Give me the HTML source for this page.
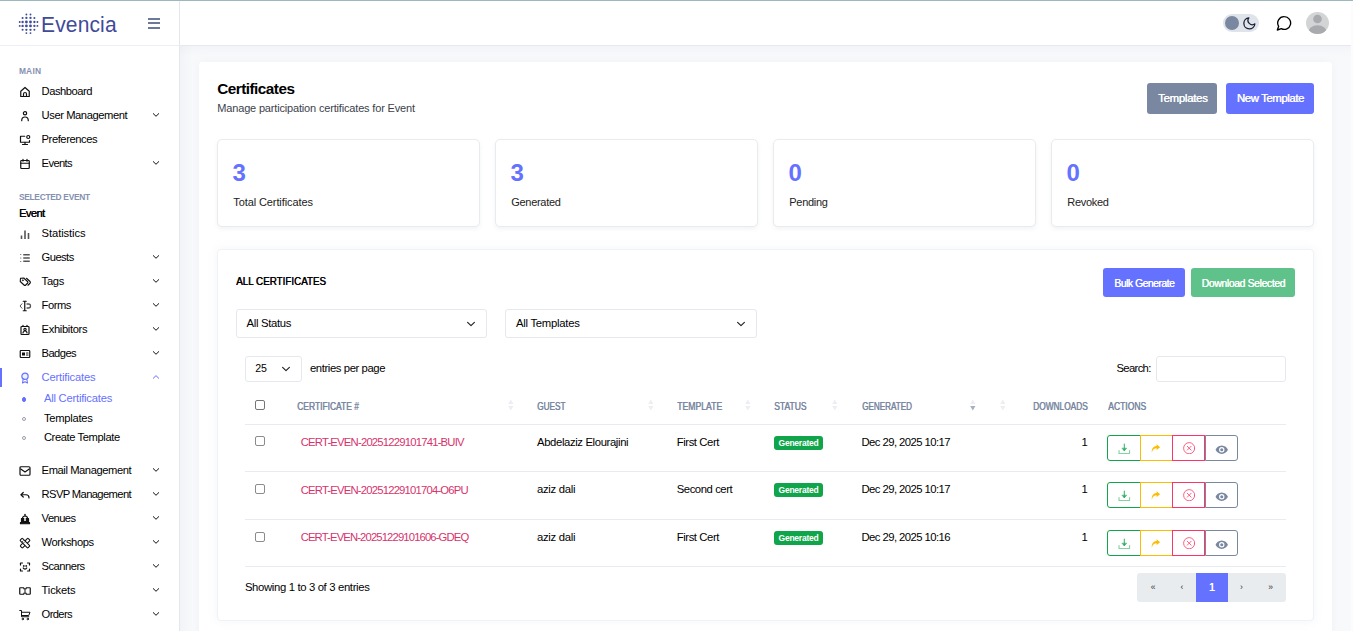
<!DOCTYPE html>
<html lang="en">
<head>
<meta charset="utf-8">
<title>Certificates - Evencia</title>
<style>
*{box-sizing:border-box;margin:0;padding:0}
html,body{width:1353px;height:631px;overflow:hidden}
body{font-family:"Liberation Sans",sans-serif;font-size:11px;color:#000;background:#f8f9fb;position:relative}
.topline{position:absolute;left:0;top:0;width:1353px;height:1px;background:#9bb8bd;z-index:60}
.rstrip{position:absolute;left:1351px;top:0;width:2px;height:631px;background:#fcfcfd;z-index:55}
/* header */
.header{position:absolute;left:0;top:0;width:1353px;height:46px;background:#fff;border-bottom:1px solid #e6e9ee;z-index:10;box-shadow:0 3px 8px rgba(180,188,205,.10)}
.logoBox{position:absolute;left:0;top:0;width:180px;height:46px;border-right:1px solid #e4e8ee;border-bottom:1px solid #eceff3;background:#fff;z-index:12}
.logoTxt{position:absolute;left:41px;top:11.7px;font-size:21px;line-height:26px;color:#3f4a9a;letter-spacing:.15px;white-space:nowrap;z-index:20;transform:scaleY(1.08);transform-origin:0 80%}
.burger{z-index:20;position:absolute;left:148px;top:18px;width:12px;height:11px}
.burger i{position:absolute;left:0;width:12px;height:2px;background:#6b7a99}
/* sidebar */
.sidebar{position:absolute;left:0;top:46px;width:180px;height:585px;background:#fff;border-right:1px solid #e4e8ee;z-index:11}
.sideshadow{position:absolute;left:180px;top:46px;width:12px;height:585px;background:linear-gradient(90deg,rgba(190,196,212,.10),rgba(190,196,212,0));z-index:5}
.ic{position:absolute;left:19px;width:12px;height:12px;color:#111;z-index:20}
.ic svg{display:block;width:12px;height:12px;fill:none;stroke:currentColor;stroke-width:2.4;stroke-linecap:round;stroke-linejoin:round;overflow:visible}
.ic.gray{color:#555}
.ch{position:absolute;left:151.5px;top:0;width:8px;height:8px;color:#111;z-index:20}
.ch svg{display:block;width:8px;height:8px;fill:none;stroke:currentColor;stroke-width:1.25;stroke-linecap:round;stroke-linejoin:round}
.ic.active,.ch.active{color:#6571ff}
.actbar{position:absolute;left:0;top:368px;width:2px;height:19px;background:#6571ff;z-index:20}
.dot{position:absolute;left:21.8px;width:4.6px;height:4.6px;border-radius:50%;border:1px solid #9a9ea8;background:#fff;z-index:20}
.dot.on{background:#6571ff;border-color:#6571ff}
/* main */
.page{position:absolute;left:199px;top:62px;width:1133px;height:580px;background:#fff;border-radius:3px;box-shadow:0 0 8px rgba(183,192,206,.12)}
.t{position:absolute;white-space:nowrap}
.btn{position:absolute;color:#fff;border-radius:3px;text-align:center;white-space:nowrap}
.stat{position:absolute;top:139px;width:263px;height:88px;background:#fff;border:1px solid #e9ebef;border-radius:5px;box-shadow:0 2px 4px rgba(190,196,206,.2)}
.card{position:absolute;left:217px;top:249px;width:1097px;height:372px;background:#fff;border:1px solid #f1f2f8;border-radius:4px;box-shadow:0 0 10px rgba(183,192,206,.16)}
.sel{position:absolute;height:29px;background:#fff;border:1px solid #e5e8ee;border-radius:3px;font-size:11px;line-height:27px;padding-left:9px;color:#000;white-space:nowrap}
.sel svg{position:absolute;right:10px;top:10px;width:10px;height:8px;fill:none;stroke:#222;stroke-width:1.15;stroke-linecap:round;stroke-linejoin:round}
.th{position:absolute;top:400px;font-size:9px;font-weight:bold;color:#7987a1;line-height:12px;white-space:nowrap}
.hr{position:absolute;left:245px;width:1041px;height:1px;background:#e8ebef}
.cb{position:absolute;left:255px;width:10px;height:10px;border:1px solid #767676;border-radius:2px;background:#fff}
.td{position:absolute;font-size:11px;line-height:14px;white-space:nowrap;color:#000}
.lnk{color:#d6336c}
.badge{position:absolute;left:774px;width:49px;height:14px;background:#10a54a;border-radius:3px;color:#fff;font-size:8.5px;font-weight:bold;line-height:14px;text-align:center;letter-spacing:-.25px}
.ab{position:absolute;width:33px;height:26px;background:#fff;border:1px solid}
.ab svg{position:absolute;left:9px;top:5px;width:13px;height:13px}
.toggle{z-index:20;position:absolute;left:1223px;top:14px;width:36px;height:18px;border-radius:9px;background:#dfe3ea}
.toggle .knob{position:absolute;left:2px;top:2px;width:14px;height:14px;border-radius:50%;background:#7987a1}
.toggle svg{position:absolute;left:18.8px;top:1.5px;width:14.7px;height:14.7px;fill:none;stroke:#1a1f36;stroke-width:2.1;stroke-linejoin:round;stroke-linecap:round}
.chat{z-index:20;position:absolute;left:1276px;top:14.6px;width:16px;height:16px;fill:none;stroke:#000;stroke-width:2;stroke-linejoin:round}
.avatar{z-index:20;position:absolute;left:1306px;top:12px;width:23px;height:22px;border-radius:50%;background:#d3d4d6;overflow:hidden}
.avatar svg{display:block;width:23px;height:22px;fill:#a9aaae}
.sort{position:absolute;top:399px;width:5.6px;height:12px}
.cb.r{border-color:#8b8b8b}
.pag{position:absolute;left:1137px;top:573px;width:149px;height:29px;background:#e9ecef;border-radius:3px;overflow:hidden}
.pag span{position:absolute;top:0;height:29px;line-height:28px;text-align:center;font-size:8.5px;color:#333}
.pag span.on{background:#6571ff;color:#fff;font-size:11.5px;line-height:29px;text-shadow:.3px 0 0 #fff}
.logoDots{position:absolute;left:0;top:0;width:46px;height:46px;z-index:20}

</style>
</head>
<body>
<div class="page"></div>
<div class="btn" style="left:1147px;top:83px;width:70px;height:31px;background:#7987a1"></div>
<div class="btn" style="left:1226px;top:83px;width:88px;height:31px;background:#6571ff"></div>
<div class="stat" style="left:217px"></div>
<div class="stat" style="left:495px"></div>
<div class="stat" style="left:773px"></div>
<div class="stat" style="left:1051px"></div>
<div class="card"></div>
<div class="btn" style="left:1103px;top:268px;width:82px;height:29px;background:#6571ff"></div>
<div class="btn" style="left:1191px;top:268px;width:104px;height:29px;background:#5fc28a"></div>
<div class="sel" style="left:236px;top:309px;width:251px"><svg viewBox="0 0 10 8"><path d="M1.6 2.300l3.4 3.4 3.4-3.4"/></svg></div>
<div class="sel" style="left:505px;top:309px;width:252px"><svg viewBox="0 0 10 8"><path d="M1.6 2.300l3.4 3.4 3.4-3.4"/></svg></div>
<div class="sel" style="left:245px;top:356px;width:57px;height:26px"><svg viewBox="0 0 10 8" style="right:10px;top:8.3px"><path d="M1.6 2.300l3.4 3.4 3.4-3.4"/></svg></div>
<div class="sel" style="left:1156px;top:356px;width:130px;height:26px"></div>
<svg class="sort" style="left:508.4px" viewBox="0 0 6 12"><path d="M3 0L5.8 5H.2z" fill="#eceef3"/><path d="M3 12L5.8 7H.2z" fill="#eceef3"/></svg>
<svg class="sort" style="left:647.8px" viewBox="0 0 6 12"><path d="M3 0L5.8 5H.2z" fill="#eceef3"/><path d="M3 12L5.8 7H.2z" fill="#eceef3"/></svg>
<svg class="sort" style="left:745.2px" viewBox="0 0 6 12"><path d="M3 0L5.8 5H.2z" fill="#eceef3"/><path d="M3 12L5.8 7H.2z" fill="#eceef3"/></svg>
<svg class="sort" style="left:832.3px" viewBox="0 0 6 12"><path d="M3 0L5.8 5H.2z" fill="#eceef3"/><path d="M3 12L5.8 7H.2z" fill="#eceef3"/></svg>
<svg class="sort" style="left:999.6px" viewBox="0 0 6 12"><path d="M3 0L5.8 5H.2z" fill="#eceef3"/><path d="M3 12L5.8 7H.2z" fill="#eceef3"/></svg>
<svg class="sort" style="left:970px" viewBox="0 0 6 12"><path d="M3 0L5.8 5H.2z" fill="#eceef3"/><path d="M3 12L5.8 7H.2z" fill="#a7afc4"/></svg>
<div class="hr" style="top:424px"></div>
<div class="hr" style="top:471px"></div>
<div class="hr" style="top:519px"></div>
<div class="hr" style="top:566px"></div>
<div class="cb" style="top:400px"></div>
<div class="cb r" style="top:436px"></div>
<div class="cb r" style="top:484px"></div>
<div class="cb r" style="top:531.5px"></div>
<div class="ab" style="left:1107px;top:435px;width:34px;border-color:#10a54a;border-radius:3px 0 0 3px"><svg style="left:10px;top:6.8px;width:12.6px;height:12.6px" viewBox="0 0 24 24" fill="none" stroke="#2fae62" stroke-width="1.9" stroke-linecap="round" stroke-linejoin="round"><path d="M12 2v12.5"/><path d="M8 10.500l4 4.5 4-4.500z" fill="#2fae62" stroke-width="1.2"/><path d="M2 14.500V20h20v-5.5" stroke="#10a54a" opacity=".5" stroke-width="2.2"/></svg></div>
<div class="ab" style="left:1140px;top:435px;width:33px;border-color:#fbbc06"><svg style="left:9.1px;top:7.4px;width:11px;height:11px" viewBox="0 0 24 24"><path d="M14.5 2.500l7.5 6.5-7.5 6.500v-4c-5.5 0-8.5 3-10.5 9C3 13 7 6.8 14.5 6.500z" fill="#fbbc06"/></svg></div>
<div class="ab" style="left:1172px;top:435px;width:33px;border-color:#ff3366"><svg style="left:10px;top:5.95px;width:12.4px;height:12.4px" viewBox="0 0 24 24" fill="none" stroke="#ff3366" stroke-width="1.5" stroke-linecap="round"><circle cx="12" cy="12" r="10.8"/><path d="M8.3 8.300l7.4 7.400M15.7 8.300l-7.4 7.4"/></svg></div>
<div class="ab" style="left:1205px;top:435px;width:33px;border-color:#7987a1;border-radius:0 3px 3px 0"><svg style="left:8.800px;top:7.200px;width:13.500px;height:13.500px" viewBox="0 0 24 24"><path d="M12 4.500C6.5 4.5 2.5 8.5 1 12c1.5 3.5 5.5 7.5 11 7.500s9.5-4 11-7.500c-1.5-3.5-5.5-7.5-11-7.500zm0 12.300a4.8 4.8 0 1 1 0-9.6 4.8 4.8 0 0 1 0 9.600z" fill="#7987a1" fill-rule="evenodd"/><circle cx="12" cy="12" r="2.7" fill="#7987a1"/></svg></div>
<div class="ab" style="left:1107px;top:482px;width:34px;border-color:#10a54a;border-radius:3px 0 0 3px"><svg style="left:10px;top:6.8px;width:12.6px;height:12.6px" viewBox="0 0 24 24" fill="none" stroke="#2fae62" stroke-width="1.9" stroke-linecap="round" stroke-linejoin="round"><path d="M12 2v12.5"/><path d="M8 10.500l4 4.5 4-4.500z" fill="#2fae62" stroke-width="1.2"/><path d="M2 14.500V20h20v-5.5" stroke="#10a54a" opacity=".5" stroke-width="2.2"/></svg></div>
<div class="ab" style="left:1140px;top:482px;width:33px;border-color:#fbbc06"><svg style="left:9.1px;top:7.4px;width:11px;height:11px" viewBox="0 0 24 24"><path d="M14.5 2.500l7.5 6.5-7.5 6.500v-4c-5.5 0-8.5 3-10.5 9C3 13 7 6.8 14.5 6.500z" fill="#fbbc06"/></svg></div>
<div class="ab" style="left:1172px;top:482px;width:33px;border-color:#ff3366"><svg style="left:10px;top:5.95px;width:12.4px;height:12.4px" viewBox="0 0 24 24" fill="none" stroke="#ff3366" stroke-width="1.5" stroke-linecap="round"><circle cx="12" cy="12" r="10.8"/><path d="M8.3 8.300l7.4 7.400M15.7 8.300l-7.4 7.4"/></svg></div>
<div class="ab" style="left:1205px;top:482px;width:33px;border-color:#7987a1;border-radius:0 3px 3px 0"><svg style="left:8.800px;top:7.200px;width:13.500px;height:13.500px" viewBox="0 0 24 24"><path d="M12 4.500C6.5 4.5 2.5 8.5 1 12c1.5 3.5 5.5 7.5 11 7.500s9.5-4 11-7.500c-1.5-3.5-5.5-7.5-11-7.500zm0 12.300a4.8 4.8 0 1 1 0-9.6 4.8 4.8 0 0 1 0 9.600z" fill="#7987a1" fill-rule="evenodd"/><circle cx="12" cy="12" r="2.7" fill="#7987a1"/></svg></div>
<div class="ab" style="left:1107px;top:530px;width:34px;border-color:#10a54a;border-radius:3px 0 0 3px"><svg style="left:10px;top:6.8px;width:12.6px;height:12.6px" viewBox="0 0 24 24" fill="none" stroke="#2fae62" stroke-width="1.9" stroke-linecap="round" stroke-linejoin="round"><path d="M12 2v12.5"/><path d="M8 10.500l4 4.5 4-4.500z" fill="#2fae62" stroke-width="1.2"/><path d="M2 14.500V20h20v-5.5" stroke="#10a54a" opacity=".5" stroke-width="2.2"/></svg></div>
<div class="ab" style="left:1140px;top:530px;width:33px;border-color:#fbbc06"><svg style="left:9.1px;top:7.4px;width:11px;height:11px" viewBox="0 0 24 24"><path d="M14.5 2.500l7.5 6.5-7.5 6.500v-4c-5.5 0-8.5 3-10.5 9C3 13 7 6.8 14.5 6.500z" fill="#fbbc06"/></svg></div>
<div class="ab" style="left:1172px;top:530px;width:33px;border-color:#ff3366"><svg style="left:10px;top:5.95px;width:12.4px;height:12.4px" viewBox="0 0 24 24" fill="none" stroke="#ff3366" stroke-width="1.5" stroke-linecap="round"><circle cx="12" cy="12" r="10.8"/><path d="M8.3 8.300l7.4 7.400M15.7 8.300l-7.4 7.4"/></svg></div>
<div class="ab" style="left:1205px;top:530px;width:33px;border-color:#7987a1;border-radius:0 3px 3px 0"><svg style="left:8.800px;top:7.200px;width:13.500px;height:13.500px" viewBox="0 0 24 24"><path d="M12 4.500C6.5 4.5 2.5 8.5 1 12c1.5 3.5 5.5 7.5 11 7.500s9.5-4 11-7.500c-1.5-3.5-5.5-7.5-11-7.500zm0 12.300a4.8 4.8 0 1 1 0-9.6 4.8 4.8 0 0 1 0 9.600z" fill="#7987a1" fill-rule="evenodd"/><circle cx="12" cy="12" r="2.7" fill="#7987a1"/></svg></div>
<div class="badge" style="top:436px">Generated</div>
<div class="badge" style="top:483px">Generated</div>
<div class="badge" style="top:531px">Generated</div>
<div class="pag"><span style="left:1px;width:30px">«</span><span style="left:30px;width:30px">‹</span><span class="on" style="left:59px;width:32px">1</span><span style="left:90px;width:29px">›</span><span style="left:119px;width:29px">»</span></div>
<div class="header"></div>
<div class="sideshadow"></div>
<div class="sidebar"></div>
<div class="logoBox"></div>
<svg class="logoDots" viewBox="0 0 46 46" fill="#3f4a9a"><circle cx="26.4" cy="14.5" r="0.93"/><circle cx="30.5" cy="14.5" r="0.93"/><circle cx="22.6" cy="17.9" r="1.01"/><circle cx="26.4" cy="17.9" r="1.16"/><circle cx="30.5" cy="17.9" r="1.16"/><circle cx="34.4" cy="17.9" r="1.01"/><circle cx="19.7" cy="22.0" r="0.97"/><circle cx="22.6" cy="22.0" r="1.17"/><circle cx="26.4" cy="22.0" r="1.40"/><circle cx="30.5" cy="22.0" r="1.40"/><circle cx="34.4" cy="22.0" r="1.16"/><circle cx="37.4" cy="22.0" r="0.96"/><circle cx="19.7" cy="25.9" r="0.97"/><circle cx="22.6" cy="25.9" r="1.17"/><circle cx="26.4" cy="25.9" r="1.40"/><circle cx="30.5" cy="25.9" r="1.40"/><circle cx="34.4" cy="25.9" r="1.16"/><circle cx="37.4" cy="25.9" r="0.96"/><circle cx="22.6" cy="29.8" r="1.02"/><circle cx="26.4" cy="29.8" r="1.16"/><circle cx="30.5" cy="29.8" r="1.16"/><circle cx="34.4" cy="29.8" r="1.01"/><circle cx="26.4" cy="33.1" r="0.94"/><circle cx="30.5" cy="33.1" r="0.94"/></svg>
<div class="logoTxt">Evencia</div>
<div class="burger"><i style="top:0"></i><i style="top:4px"></i><i style="top:9px"></i></div>
<div class="toggle"><span class="knob"></span><svg viewBox="0 0 24 24"><path d="M21 12.790A9 9 0 1 1 11.210 3 7 7 0 0 0 21 12.790z"/></svg></div>
<svg class="chat" viewBox="0 0 24 24"><path d="M12.5 2.5a9.5 9.5 0 1 1-4.5 17.9L2 22.5l2-5.500A9.5 9.5 0 0 1 12.5 2.5z"/></svg>
<div class="avatar"><svg viewBox="0 0 22 22"><circle cx="11" cy="7" r="4.3"/><ellipse cx="11" cy="21" rx="9.5" ry="7.8"/></svg></div>
<div class="rstrip"></div>
<div class="topline"></div>
<span class="ic" style="top:85.7px"><svg viewBox="0 0 24 24"><path d="M3.5 21V10.500L12 3l8.5 7.500V21z"/><path d="M9 21v-5a3 3 0 0 1 6 0v5"/></svg></span>
<span class="ic" style="top:109.7px"><svg viewBox="0 0 24 24"><circle cx="12" cy="6.5" r="3.3"/><path d="M5.5 21.500v-1a6.5 6.5 0 0 1 13 0v1"/></svg></span>
<span class="ch" style="top:111px"><svg viewBox="0 0 10 10"><path d="M1.6 3.3L5 6.6l3.4-3.3"/></svg></span>
<span class="ic" style="top:133.7px"><svg viewBox="0 0 24 24"><path d="M11.5 4.500H3v12h18v-3.5"/><path d="M7 21h10M12 16.500V21"/><circle cx="18.5" cy="6" r="3"/></svg></span>
<span class="ic" style="top:157.7px"><svg viewBox="0 0 24 24"><rect x="3.5" y="5" width="17" height="16" rx="1.5"/><path d="M3.5 10.5h17M8 2.5v4M16 2.5v4"/></svg></span>
<span class="ch" style="top:159px"><svg viewBox="0 0 10 10"><path d="M1.6 3.3L5 6.6l3.4-3.3"/></svg></span>
<span class="ic gray" style="top:227.7px"><svg viewBox="0 0 24 24"><path d="M5 15v7M12 5v17M19 10v12" stroke-width="3.2" stroke-linecap="butt"/></svg></span>
<span class="ic gray" style="top:251.7px"><svg viewBox="0 0 24 24"><path d="M8.5 5.500h13M8.5 12h13M8.5 18.500h13" stroke-width="2.9" stroke-linecap="butt"/><path d="M3.5 5h.01M3.5 12h.01M3.5 19h.01"/></svg></span>
<span class="ch gray" style="top:253px"><svg viewBox="0 0 10 10"><path d="M1.6 3.3L5 6.6l3.4-3.3"/></svg></span>
<span class="ic" style="top:275.7px"><svg viewBox="0 0 24 24"><path d="M3 4.500l6.5-.5 7.5 7c1 1 1 2.5 0 3.500l-3.5 3.500c-1 1-2.5 1-3.5 0l-7.5-7z" stroke-width="2.2"/><circle cx="7.5" cy="8.5" r=".9" stroke-width="1.6"/><path d="M15 4.500l7 6.500c1 1 1 2.5 0 3.500l-4 4" stroke-width="2.2"/></svg></span>
<span class="ch" style="top:277px"><svg viewBox="0 0 10 10"><path d="M1.6 3.3L5 6.6l3.4-3.3"/></svg></span>
<span class="ic" style="top:299.7px"><svg viewBox="0 0 24 24"><path d="M8.5 2.500h6M8.5 21.500h6M11.5 2.500v19" stroke-width="2.4"/><path d="M16 8h3a4 4 0 0 1 0 8h-3" stroke="#555" stroke-width="2.6"/><path d="M6 7.500L2 12l4 4.5" stroke="#555" stroke-width="2"/></svg></span>
<span class="ch" style="top:301px"><svg viewBox="0 0 10 10"><path d="M1.6 3.3L5 6.6l3.4-3.3"/></svg></span>
<span class="ic" style="top:323.7px"><svg viewBox="0 0 24 24"><rect x="4" y="5" width="16" height="16" rx="1.5"/><path d="M8 2.5v2.500M16 2.5v2.5"/><circle cx="12" cy="11" r="2.3"/><path d="M8 18a4 4 0 0 1 8 0"/></svg></span>
<span class="ch" style="top:325px"><svg viewBox="0 0 10 10"><path d="M1.6 3.3L5 6.6l3.4-3.3"/></svg></span>
<span class="ic" style="top:347.7px"><svg viewBox="0 0 24 24"><rect x="2.5" y="5" width="19" height="14" rx="1.5"/><rect x="6" y="9" width="6" height="6" fill="currentColor" stroke="none"/><path d="M15 10h3M15 14h3"/></svg></span>
<span class="ch" style="top:349px"><svg viewBox="0 0 10 10"><path d="M1.6 3.3L5 6.6l3.4-3.3"/></svg></span>
<span class="ic active" style="top:371.7px"><svg viewBox="0 0 24 24"><circle cx="12" cy="8.5" r="6.3" fill="#eef0ff"/><path d="M8.3 14.500L7 22l5-2.300L17 22l-1.3-7.5" stroke-width="2.1"/></svg></span>
<span class="ch active" style="top:373px"><svg viewBox="0 0 10 10"><path d="M1.6 6.6L5 3.3l3.4 3.3"/></svg></span>
<span class="ic" style="top:464.7px"><svg viewBox="0 0 24 24"><rect x="2" y="3.5" width="20" height="17" rx="2"/><path d="M3.5 8l8.5 6 8.5-6"/></svg></span>
<span class="ch" style="top:466px"><svg viewBox="0 0 10 10"><path d="M1.6 3.3L5 6.6l3.4-3.3"/></svg></span>
<span class="ic" style="top:488.7px"><svg viewBox="0 0 24 24"><path d="M8.5 7L4 11.5 8.5 16"/><path d="M4.5 11.500H14a6 6 0 0 1 6 6v.5"/></svg></span>
<span class="ch" style="top:490px"><svg viewBox="0 0 10 10"><path d="M1.6 3.3L5 6.6l3.4-3.3"/></svg></span>
<span class="ic" style="top:512.7px"><svg viewBox="0 0 24 24"><path d="M3 19h18v2.500H3z" fill="currentColor"/><path d="M5 19v-8h14v8" fill="currentColor"/><path d="M7 11a5 5 0 0 1 10 0"/><path d="M12 2.5V6"/><rect x="10.5" y="10" width="3" height="6" fill="#fff" stroke="none"/></svg></span>
<span class="ch" style="top:514px"><svg viewBox="0 0 10 10"><path d="M1.6 3.3L5 6.6l3.4-3.3"/></svg></span>
<span class="ic" style="top:536.7px"><svg viewBox="0 0 24 24"><g stroke-width="2.1"><rect x="1" y="9" width="22" height="6.5" rx="1.5" transform="rotate(-45 12 12)"/><rect x="1" y="9" width="22" height="6.5" rx="1.5" transform="rotate(45 12 12)" fill="#fff"/><path d="M6.5 9.500l1.8-1.800M9 12l1.8-1.8" stroke-width="1.4"/></g></svg></span>
<span class="ch" style="top:538px"><svg viewBox="0 0 10 10"><path d="M1.6 3.3L5 6.6l3.4-3.3"/></svg></span>
<span class="ic" style="top:560.7px"><svg viewBox="0 0 24 24"><path d="M3 8V4h4M17 4h4v4M21 16v4h-4M7 20H3v-4"/><circle cx="9.5" cy="10" r=".6"/><circle cx="14.5" cy="10" r=".6"/><path d="M8.5 14a4 4 0 0 0 7 0"/></svg></span>
<span class="ch" style="top:562px"><svg viewBox="0 0 10 10"><path d="M1.6 3.3L5 6.6l3.4-3.3"/></svg></span>
<span class="ic" style="top:584.7px"><svg viewBox="0 0 24 24"><path d="M2.5 5.500h6.800a2.7 2.7 0 0 0 5.4 0h6.800a1 1 0 0 1 1 1v11a1 1 0 0 1-1 1h-6.800a2.7 2.7 0 0 0-5.4 0H2.500a1 1 0 0 1-1-1v-11a1 1 0 0 1 1-1z" stroke-width="2.4"/><path d="M12 10.500v3" stroke-width="2"/></svg></span>
<span class="ch" style="top:586px"><svg viewBox="0 0 10 10"><path d="M1.6 3.3L5 6.6l3.4-3.3"/></svg></span>
<span class="ic" style="top:608.7px"><svg viewBox="0 0 24 24"><g stroke-width="2"><path d="M1.5 3h3.500v12.500h14.5"/><path d="M5 6.500h17l-2.5 6.500H5"/><circle cx="7.5" cy="20" r="1.5"/><circle cx="17.5" cy="20" r="1.5"/></g></svg></span>
<span class="ch" style="top:610px"><svg viewBox="0 0 10 10"><path d="M1.6 3.3L5 6.6l3.4-3.3"/></svg></span>
<div class="actbar"></div>
<span class="dot on" style="top:397px"></span>
<span class="dot" style="top:416.8px"></span>
<span class="dot" style="top:435.8px"></span>
<div class="t" style="left:41.6px;top:84px;font-size:11.2px;line-height:14px;color:#000;letter-spacing:-0.49px;z-index:20;">Dashboard</div>
<div class="t" style="left:41.6px;top:108px;font-size:11.2px;line-height:14px;color:#000;letter-spacing:-0.43px;z-index:20;">User Management</div>
<div class="t" style="left:41.6px;top:132px;font-size:11.2px;line-height:14px;color:#000;letter-spacing:-0.44px;z-index:20;">Preferences</div>
<div class="t" style="left:41.6px;top:156px;font-size:11.2px;line-height:14px;color:#000;letter-spacing:-0.63px;z-index:20;">Events</div>
<div class="t" style="left:41.6px;top:226px;font-size:11.2px;line-height:14px;color:#000;letter-spacing:-0.08px;z-index:20;">Statistics</div>
<div class="t" style="left:41.6px;top:250px;font-size:11.2px;line-height:14px;color:#000;letter-spacing:-0.56px;z-index:20;">Guests</div>
<div class="t" style="left:41.6px;top:274px;font-size:11.2px;line-height:14px;color:#000;letter-spacing:-0.30px;z-index:20;">Tags</div>
<div class="t" style="left:41.6px;top:298px;font-size:11.2px;line-height:14px;color:#000;letter-spacing:-0.49px;z-index:20;">Forms</div>
<div class="t" style="left:41.6px;top:322px;font-size:11.2px;line-height:14px;color:#000;letter-spacing:-0.35px;z-index:20;">Exhibitors</div>
<div class="t" style="left:41.6px;top:346px;font-size:11.2px;line-height:14px;color:#000;letter-spacing:-0.58px;z-index:20;">Badges</div>
<div class="t" style="left:41.6px;top:370px;font-size:11.2px;line-height:14px;color:#6571ff;letter-spacing:-0.17px;z-index:20;">Certificates</div>
<div class="t" style="left:41.6px;top:463px;font-size:11.2px;line-height:14px;color:#000;letter-spacing:-0.42px;z-index:20;">Email Management</div>
<div class="t" style="left:41.6px;top:487px;font-size:11.2px;line-height:14px;color:#000;letter-spacing:-0.62px;z-index:20;">RSVP Management</div>
<div class="t" style="left:41.6px;top:511px;font-size:11.2px;line-height:14px;color:#000;letter-spacing:-0.56px;z-index:20;">Venues</div>
<div class="t" style="left:41.6px;top:535px;font-size:11.2px;line-height:14px;color:#000;letter-spacing:-0.40px;z-index:20;">Workshops</div>
<div class="t" style="left:41.6px;top:559px;font-size:11.2px;line-height:14px;color:#000;letter-spacing:-0.52px;z-index:20;">Scanners</div>
<div class="t" style="left:41.6px;top:583px;font-size:11.2px;line-height:14px;color:#000;letter-spacing:-0.18px;z-index:20;">Tickets</div>
<div class="t" style="left:41.6px;top:607px;font-size:11.2px;line-height:14px;color:#000;letter-spacing:-0.63px;z-index:20;">Orders</div>
<div class="t" style="left:43.9px;top:391px;font-size:11.2px;line-height:14px;color:#6571ff;letter-spacing:-0.21px;z-index:20;">All Certificates</div>
<div class="t" style="left:43.9px;top:411px;font-size:11.2px;line-height:14px;color:#000;letter-spacing:-0.26px;z-index:20;">Templates</div>
<div class="t" style="left:43.9px;top:430px;font-size:11.2px;line-height:14px;color:#000;letter-spacing:-0.40px;z-index:20;">Create Template</div>
<div class="t" style="left:18.9px;top:65px;font-size:8.4px;line-height:12px;color:#8591b0;font-weight:bold;letter-spacing:0.24px;z-index:20;">MAIN</div>
<div class="t" style="left:18.9px;top:191px;font-size:8.4px;line-height:12px;color:#8591b0;font-weight:bold;letter-spacing:-0.28px;z-index:20;">SELECTED EVENT</div>
<div class="t" style="left:18.9px;top:206px;font-size:11.2px;line-height:14px;color:#000;letter-spacing:-0.62px;z-index:20;text-shadow:.35px 0 0 #000;">Event</div>
<div class="t" style="left:217.3px;top:79px;font-size:15.3px;line-height:19px;color:#000;font-weight:bold;letter-spacing:-0.52px;">Certificates</div>
<div class="t" style="left:217.3px;top:101px;font-size:11px;line-height:14px;color:#3b3f4c;letter-spacing:-0.17px;">Manage participation certificates for Event</div>
<div class="t" style="left:1158.0px;top:91px;font-size:11.4px;line-height:14px;color:#fff;letter-spacing:-0.27px;text-shadow:.35px 0 0 #fff">Templates</div>
<div class="t" style="left:1236.8px;top:91px;font-size:11.4px;line-height:14px;color:#fff;letter-spacing:-0.41px;text-shadow:.35px 0 0 #fff">New Template</div>
<div class="t" style="left:232.6px;top:158px;font-size:24px;line-height:29px;color:#6571ff;font-weight:bold;">3</div>
<div class="t" style="left:233.3px;top:195px;font-size:11px;line-height:14px;color:#222;letter-spacing:-0.10px;">Total Certificates</div>
<div class="t" style="left:510.6px;top:158px;font-size:24px;line-height:29px;color:#6571ff;font-weight:bold;">3</div>
<div class="t" style="left:511.3px;top:195px;font-size:11px;line-height:14px;color:#222;letter-spacing:-.3px">Generated</div>
<div class="t" style="left:788.6px;top:158px;font-size:24px;line-height:29px;color:#6571ff;font-weight:bold;">0</div>
<div class="t" style="left:789.3px;top:195px;font-size:11px;line-height:14px;color:#222;letter-spacing:-.3px">Pending</div>
<div class="t" style="left:1066.6px;top:158px;font-size:24px;line-height:29px;color:#6571ff;font-weight:bold;">0</div>
<div class="t" style="left:1067.3px;top:195px;font-size:11px;line-height:14px;color:#222;letter-spacing:-.3px">Revoked</div>
<div class="t" style="left:236.2px;top:274px;font-size:10.8px;line-height:14px;color:#000;transform:scaleX(0.910);transform-origin:0 0;text-shadow:.5px 0 0 #000">ALL CERTIFICATES</div>
<div class="t" style="left:1114.3px;top:277px;font-size:10.4px;line-height:13px;color:#fff;letter-spacing:-0.50px;text-shadow:.3px 0 0 #fff">Bulk Generate</div>
<div class="t" style="left:1201.6px;top:277px;font-size:10.4px;line-height:13px;color:#fff;letter-spacing:-0.36px;text-shadow:.3px 0 0 #fff">Download Selected</div>
<div class="t" style="left:246.6px;top:316px;font-size:11.3px;line-height:14px;color:#000;letter-spacing:-0.32px;">All Status</div>
<div class="t" style="left:516.0px;top:316px;font-size:11.3px;line-height:14px;color:#000;letter-spacing:-0.26px;">All Templates</div>
<div class="t" style="left:255.2px;top:361px;font-size:10.6px;line-height:14px;color:#000;letter-spacing:-0.17px;">25</div>
<div class="t" style="left:310.0px;top:361px;font-size:11.3px;line-height:14px;color:#000;letter-spacing:-0.41px;">entries per page</div>
<div class="t" style="left:1116.5px;top:361px;font-size:11.3px;line-height:14px;color:#000;letter-spacing:-0.68px;">Search:</div>
<div class="t" style="left:296.6px;top:400px;font-size:10px;line-height:13px;color:#7987a1;transform:scaleX(0.846);transform-origin:0 0;text-shadow:.5px 0 0 #7987a1">CERTIFICATE #</div>
<div class="t" style="left:537.0px;top:400px;font-size:10px;line-height:13px;color:#7987a1;transform:scaleX(0.822);transform-origin:0 0;text-shadow:.5px 0 0 #7987a1">GUEST</div>
<div class="t" style="left:676.7px;top:400px;font-size:10px;line-height:13px;color:#7987a1;transform:scaleX(0.864);transform-origin:0 0;text-shadow:.5px 0 0 #7987a1">TEMPLATE</div>
<div class="t" style="left:773.9px;top:400px;font-size:10px;line-height:13px;color:#7987a1;transform:scaleX(0.852);transform-origin:0 0;text-shadow:.5px 0 0 #7987a1">STATUS</div>
<div class="t" style="left:861.5px;top:400px;font-size:10px;line-height:13px;color:#7987a1;transform:scaleX(0.809);transform-origin:0 0;text-shadow:.5px 0 0 #7987a1">GENERATED</div>
<div class="t" style="left:1032.8px;top:400px;font-size:10px;line-height:13px;color:#7987a1;transform:scaleX(0.832);transform-origin:0 0;text-shadow:.5px 0 0 #7987a1">DOWNLOADS</div>
<div class="t" style="left:1107.6px;top:400px;font-size:10px;line-height:13px;color:#7987a1;transform:scaleX(0.856);transform-origin:0 0;text-shadow:.5px 0 0 #7987a1">ACTIONS</div>
<div class="t" style="left:300.7px;top:435px;font-size:11.3px;line-height:14px;color:#d6336c;letter-spacing:-0.80px;">CERT-EVEN-20251229101741-BUIV</div>
<div class="t" style="left:537.0px;top:435px;font-size:11.3px;line-height:14px;color:#000;letter-spacing:-0.37px;">Abdelaziz Elourajini</div>
<div class="t" style="left:676.7px;top:435px;font-size:11.3px;line-height:14px;color:#000;letter-spacing:-0.41px;">First Cert</div>
<div class="t" style="left:861.5px;top:435px;font-size:11.3px;line-height:14px;color:#000;letter-spacing:-0.56px;">Dec 29, 2025 10:17</div>
<div class="t" style="left:1081.5px;top:435px;font-size:11.3px;line-height:14px;color:#000;">1</div>
<div class="t" style="left:300.7px;top:483px;font-size:11.3px;line-height:14px;color:#d6336c;letter-spacing:-0.81px;">CERT-EVEN-20251229101704-O6PU</div>
<div class="t" style="left:537.0px;top:482px;font-size:11.3px;line-height:14px;color:#000;letter-spacing:-0.30px;">aziz dali</div>
<div class="t" style="left:676.7px;top:482px;font-size:11.3px;line-height:14px;color:#000;letter-spacing:-0.43px;">Second cert</div>
<div class="t" style="left:861.5px;top:482px;font-size:11.3px;line-height:14px;color:#000;letter-spacing:-0.56px;">Dec 29, 2025 10:17</div>
<div class="t" style="left:1081.5px;top:482px;font-size:11.3px;line-height:14px;color:#000;">1</div>
<div class="t" style="left:300.7px;top:530px;font-size:11.3px;line-height:14px;color:#d6336c;letter-spacing:-0.88px;">CERT-EVEN-20251229101606-GDEQ</div>
<div class="t" style="left:537.0px;top:530px;font-size:11.3px;line-height:14px;color:#000;letter-spacing:-0.30px;">aziz dali</div>
<div class="t" style="left:676.7px;top:530px;font-size:11.3px;line-height:14px;color:#000;letter-spacing:-0.41px;">First Cert</div>
<div class="t" style="left:861.5px;top:530px;font-size:11.3px;line-height:14px;color:#000;letter-spacing:-0.56px;">Dec 29, 2025 10:16</div>
<div class="t" style="left:1081.5px;top:530px;font-size:11.3px;line-height:14px;color:#000;">1</div>
<div class="t" style="left:244.9px;top:580px;font-size:11.3px;line-height:14px;color:#000;letter-spacing:-0.34px;">Showing 1 to 3 of 3 entries</div>
</body>
</html>
